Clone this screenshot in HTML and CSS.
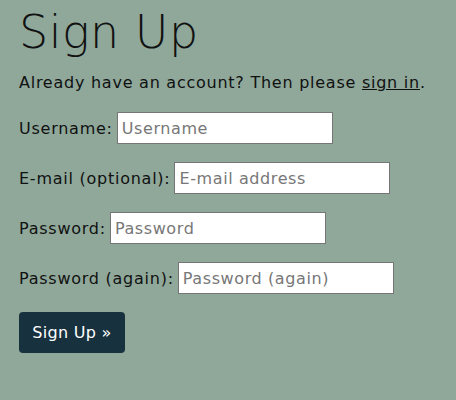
FILE: index.html
```html
<!DOCTYPE html>
<html lang="en">
<head>
<meta charset="utf-8">
<title>Sign Up</title>
<link rel="stylesheet" href="styles.css">
</head>
<body>
<main class="page">
  <h1 class="title">Sign Up</h1>
  <p class="intro">Already have an account? Then please <a class="link" href="#">sign in</a>.</p>
  <form class="form">
    <p class="row"><label class="label" for="u">Username:</label> <input class="field" id="u" type="text" placeholder="Username"></p>
    <p class="row"><label class="label" for="e">E-mail (optional):</label> <input class="field" id="e" type="email" placeholder="E-mail address"></p>
    <p class="row"><label class="label" for="p1">Password:</label> <input class="field" id="p1" type="password" placeholder="Password"></p>
    <p class="row"><label class="label" for="p2">Password (again):</label> <input class="field" id="p2" type="password" placeholder="Password (again)"></p>
    <button class="btn" type="submit">Sign Up »</button>
  </form>
</main>
</body>
</html>
```
FILE: styles.css
```css
html, body {
  margin: 0;
  padding: 0;
  background: #8fa89a;
}
body {
  font-family: "DejaVu Sans", sans-serif;
  font-size: 16px;
  letter-spacing: 0.75px;
  color: #111;
}
.page {
  padding: 4px 19px;
}
.title {
  font-family: "DejaVu Sans", sans-serif;
  font-weight: 200;
  font-size: 46px;
  line-height: 56px;
  letter-spacing: 0.5px;
  margin: 0 0 11px;
}
.intro {
  margin: 0 0 17px;
  line-height: 24px;
}
.link {
  color: #111;
  text-decoration: underline;
}
.form {
  margin: 0;
}
.row {
  margin: 0 0 18px;
  display: flex;
  align-items: center;
  gap: 4px;
}
.field {
  width: 216px;
  height: 32px;
  box-sizing: border-box;
  border: 1px solid #767676;
  background: #fff;
  font-family: inherit;
  font-size: 16px;
  letter-spacing: 0.6px;
  padding: 0 4px;
  margin: 0;
}
.field::placeholder {
  color: #777;
}
.btn {
  background: #17313e;
  color: #fff;
  border: none;
  border-radius: 4px;
  width: 106px;
  height: 41px;
  font-family: inherit;
  font-size: 16px;
  letter-spacing: 0.3px;
}
```
